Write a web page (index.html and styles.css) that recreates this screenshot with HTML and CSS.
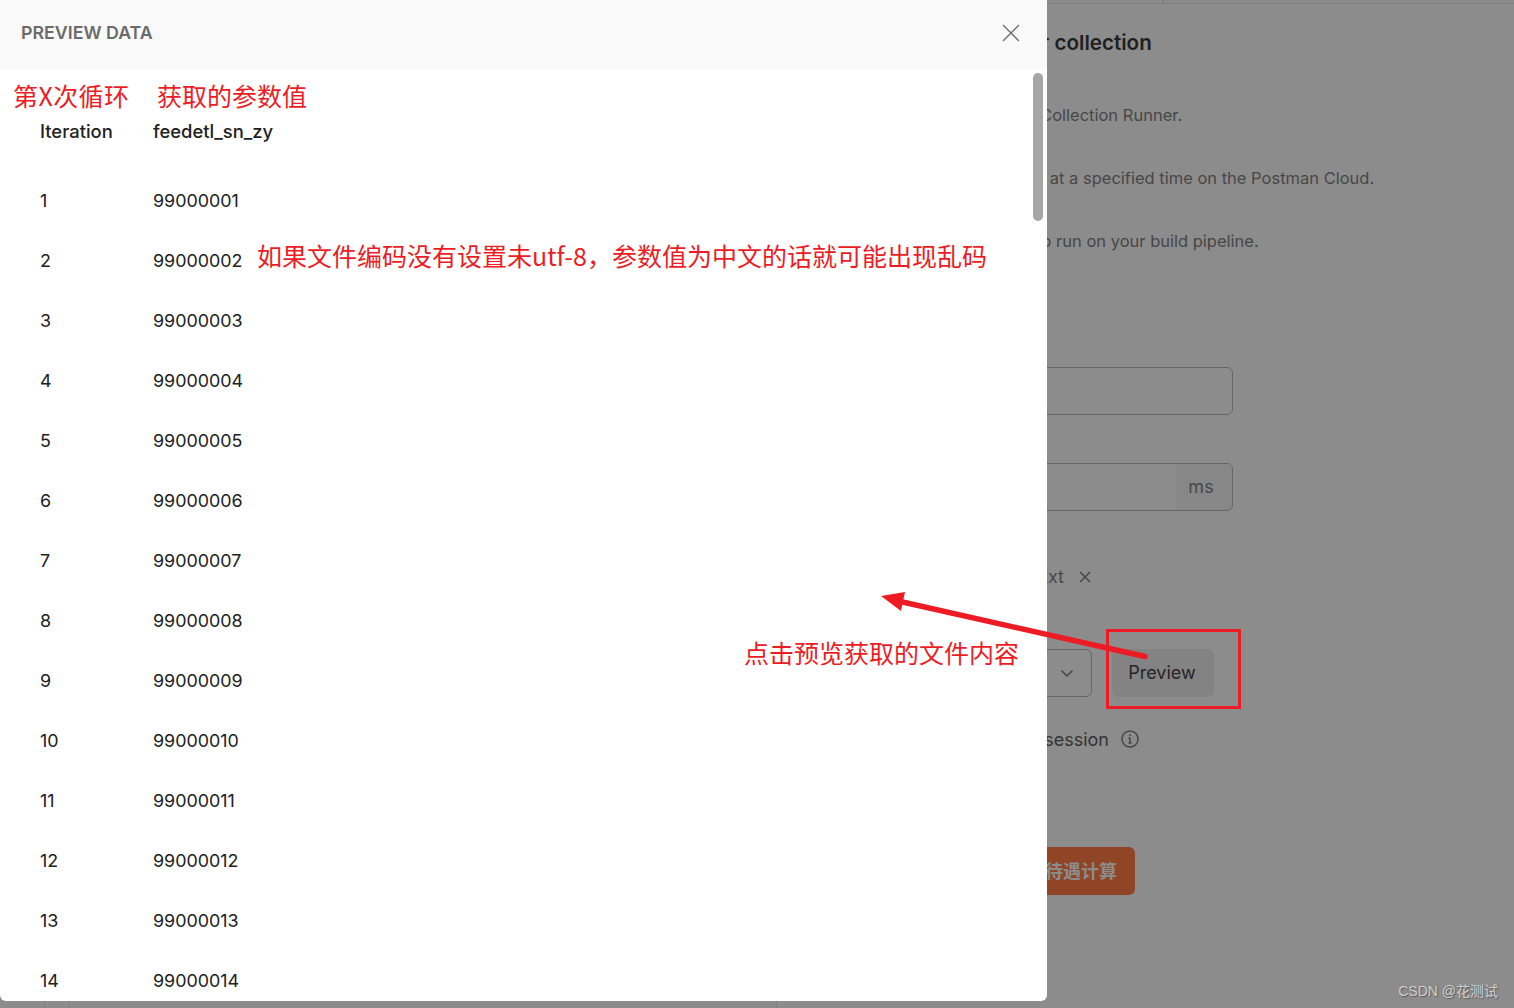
FILE: index.html
```html
<!DOCTYPE html>
<html lang="en">
<head>
    <meta charset="UTF-8">
    <meta name="viewport" content="width=device-width, initial-scale=1.0">
    <title>Preview data</title>
    <link rel="stylesheet" href="styles.css">
</head>
<body>
    <div class="page">
        <div class="top-bar"><div class="top-tab"></div></div>

        <div class="runner">
            <h2 class="runner-title">Choose how to run your collection</h2>
            <p class="runner-line line-manual">Run this collection in the Collection Runner.</p>
            <p class="runner-line">Periodically run collection at a specified time on the Postman Cloud.</p>
            <p class="runner-line line-cli">Configure CLI command to run on your build pipeline.</p>

            <div class="field first-field"></div>
            <div class="field second-field"><span class="unit">ms</span></div>

            <div class="file-row">
                <span>data_file.txt</span>
                <svg class="file-x" width="14" height="14" viewBox="0 0 14 14"><path d="M2 2l10 10M12 2L2 12"/></svg>
            </div>

            <div class="type-row">
                <div class="type-select">
                    <svg width="14" height="14" viewBox="0 0 14 14"><path d="M1.500 4.500L7 10l5.500-5.500"/></svg>
                </div>
                <div class="preview-btn">Preview</div>
            </div>

            <div class="session-row">
                <span>Persist responses for a session</span>
                <svg width="18" height="18" viewBox="0 0 18 18"><circle cx="9" cy="9" r="8"/><path d="M9 8v5M7.500 13h3M7.500 8H9"/><circle class="dot" cx="9" cy="5.200" r="1"/></svg>
            </div>

            <div class="run-btn">运行待遇计算</div>
        </div>

        <div class="bottom-bar"><span class="tick one"></span><span class="tick two"></span><span class="tick three"></span></div>
    </div>

    <div class="modal">
        <div class="modal-head">
            <span class="modal-title">PREVIEW DATA</span>
            <svg class="modal-close" width="18" height="18" viewBox="0 0 18 18"><path d="M1 1l16 16M17 1L1 17"/></svg>
        </div>
        <div class="modal-body">
            <div class="data-row data-head"><span>Iteration</span><span>feedetl_sn_zy</span></div>
            <div class="data-row"><span>1</span><span>99000001</span></div>
            <div class="data-row"><span>2</span><span>99000002</span></div>
            <div class="data-row"><span>3</span><span>99000003</span></div>
            <div class="data-row"><span>4</span><span>99000004</span></div>
            <div class="data-row"><span>5</span><span>99000005</span></div>
            <div class="data-row"><span>6</span><span>99000006</span></div>
            <div class="data-row"><span>7</span><span>99000007</span></div>
            <div class="data-row"><span>8</span><span>99000008</span></div>
            <div class="data-row"><span>9</span><span>99000009</span></div>
            <div class="data-row"><span>10</span><span>99000010</span></div>
            <div class="data-row"><span>11</span><span>99000011</span></div>
            <div class="data-row"><span>12</span><span>99000012</span></div>
            <div class="data-row"><span>13</span><span>99000013</span></div>
            <div class="data-row"><span>14</span><span>99000014</span></div>
            <div class="scroll-thumb"></div>
        </div>
    </div>

    <!-- red notes drawn on top of the screenshot -->
    <span class="note note-iter">第X次循环</span>
    <span class="note note-value">获取的参数值</span>
    <span class="note note-encoding">如果文件编码没有设置未utf-8，参数值为中文的话就可能出现乱码</span>
    <span class="note note-preview">点击预览获取的文件内容</span>
    <div class="red-box"></div>
    <svg class="arrow" width="1514" height="1008" viewBox="0 0 1514 1008">
        <path class="arrow-line" d="M1145 656.500L898 601"/>
        <path class="arrow-head" d="M881 596L905 592L901 611Z"/>
    </svg>

    <span class="watermark">CSDN @花测试</span>
</body>
</html>
```

FILE: styles.css
```css
* {
    box-sizing: border-box;
}
html, body {
    height: 100%;
}
body {
    margin: 0;
    overflow: hidden;
    background-color: #8c8c8c;
    font-family: Inter, "Noto Sans CJK SC", sans-serif;
    color: #333;
}
.page {
    height: 1008px;
    display: flex;
    flex-direction: column;
}
.top-bar {
    height: 4px;
    border-bottom: 1px solid #7f7f7f;
}
.top-tab {
    width: 1164px;
    height: 3px;
    border-right: 2px solid #7f7f7f;
}
.runner {
    flex: 1;
    margin-left: 796px;
    width: 437px;
    font-size: 18px;
    color: #474747;
}
.runner-title {
    margin: 27px 0 0 16px;
    font-size: 20.600px;
    line-height: 24px;
    font-weight: 600;
    color: #1f1f1f;
    white-space: nowrap;
}
.runner-line {
    margin: 39px 0 0 48px;
    font-size: 16.500px;
    line-height: 24px;
    white-space: nowrap;
}
.line-manual {
    margin-top: 48px;
    margin-left: 49px;
}
.line-cli {
    margin-left: 46px;
}
.field {
    height: 48px;
    border: 1px solid #666;
    border-radius: 6px;
}
.first-field {
    margin-top: 114px;
}
.second-field {
    margin-top: 48px;
    display: flex;
    justify-content: flex-end;
}
.unit {
    width: 56px;
    padding-right: 6px;
    line-height: 46px;
    text-align: center;
    background-color: #878787;
    border-radius: 0 6px 6px 0;
}
.file-row {
    margin-top: 54px;
    height: 24px;
    display: flex;
    align-items: center;
    justify-content: flex-end;
    gap: 14px;
    width: 296px;
    line-height: 24px;
}
.file-x {
    fill: none;
    stroke: #474747;
    stroke-width: 1.500;
}
.type-row {
    margin-top: 60px;
    display: flex;
    gap: 20px;
}
.type-select {
    width: 296px;
    height: 48px;
    border: 1px solid #666;
    border-radius: 6px;
    display: flex;
    align-items: center;
    justify-content: flex-end;
    padding-right: 17px;
}
.type-select svg {
    fill: none;
    stroke: #474747;
    stroke-width: 1.500;
}
.preview-btn {
    width: 102px;
    height: 48px;
    padding-right: 2px;
    line-height: 48px;
    text-align: center;
    background-color: #838383;
    border-radius: 6px;
    color: #252525;
}
.session-row {
    margin-top: 30px;
    width: 343px;
    display: flex;
    align-items: center;
    justify-content: flex-end;
    gap: 12px;
    height: 24px;
    color: #333;
    white-space: nowrap;
}
.session-row svg {
    flex: none;
    fill: none;
    stroke: #474747;
    stroke-width: 1.500;
}
.session-row .dot {
    fill: #474747;
    stroke: none;
}
.run-btn {
    margin-top: 96px;
    width: 339px;
    height: 48px;
    line-height: 46px;
    text-align: right;
    padding-right: 18px;
    background-color: #8f4526;
    border-radius: 6px;
    color: #8c8c8c;
    font-family: "Noto Sans CJK SC", sans-serif;
    font-weight: 700;
    font-size: 18px;
}
.bottom-bar {
    height: 7px;
    position: relative;
}
.tick {
    position: absolute;
    top: 0;
    width: 1px;
    height: 7px;
    background-color: #7f7f7f;
}
.tick.one {
    left: 44px;
}
.tick.two {
    left: 69px;
}
.tick.three {
    left: 776px;
}
.modal {
    position: absolute;
    top: 0;
    left: 0;
    width: 1047px;
    height: 1001px;
    background-color: #fff;
    border-radius: 0 0 6px 6px;
    overflow: hidden;
    display: flex;
    flex-direction: column;
}
.modal-head {
    height: 69px;
    flex: none;
    background-color: #f9f9f9;
    padding: 0 27px 3px 21px;
    display: flex;
    align-items: center;
    justify-content: space-between;
}
.modal-title {
    font-size: 17.800px;
    line-height: 24px;
    font-weight: 600;
    color: #6b6b6b;
}
.modal-close {
    fill: none;
    stroke: #6b6b6b;
    stroke-width: 1.300;
}
.modal-body {
    flex: 1;
    position: relative;
    overflow: hidden;
    padding: 34px 0 0 40px;
}
.data-row {
    display: grid;
    grid-template-columns: 113px 1fr;
    height: 60px;
    font-size: 17.900px;
    line-height: 60px;
    color: #212121;
}
.data-head {
    height: 68px;
    font-size: 18.400px;
    line-height: 57px;
    font-weight: 500;
}
.scroll-thumb {
    position: absolute;
    top: 4px;
    right: 4px;
    width: 10px;
    height: 148px;
    border-radius: 5px;
    background-color: #a6a6a6;
}
.note {
    position: absolute;
    font-family: "Noto Sans CJK SC", sans-serif;
    font-size: 25px;
    line-height: 34px;
    color: #ed1c24;
    white-space: nowrap;
}
.note-iter {
    top: 78px;
    left: 13px;
    letter-spacing: 0.400px;
}
.note-value {
    top: 78px;
    left: 157px;
}
.note-encoding {
    top: 238px;
    left: 257px;
}
.note-preview {
    top: 635px;
    left: 744px;
}
.red-box {
    position: absolute;
    top: 629px;
    left: 1106px;
    width: 135px;
    height: 80px;
    border: 3px solid #ed1c24;
}
.arrow {
    position: absolute;
    top: 0;
    left: 0;
    pointer-events: none;
}
.arrow-line {
    fill: none;
    stroke: #ed1c24;
    stroke-width: 5.500;
    stroke-linecap: round;
}
.arrow-head {
    fill: #ed1c24;
}
.watermark {
    position: absolute;
    top: 982px;
    right: 16px;
    font-family: "Liberation Sans", "Noto Sans CJK SC", sans-serif;
    font-size: 14px;
    line-height: 18px;
    color: #cfcfcf;
    text-shadow: 1px 1px 1px #5a5a5a;
}
```
